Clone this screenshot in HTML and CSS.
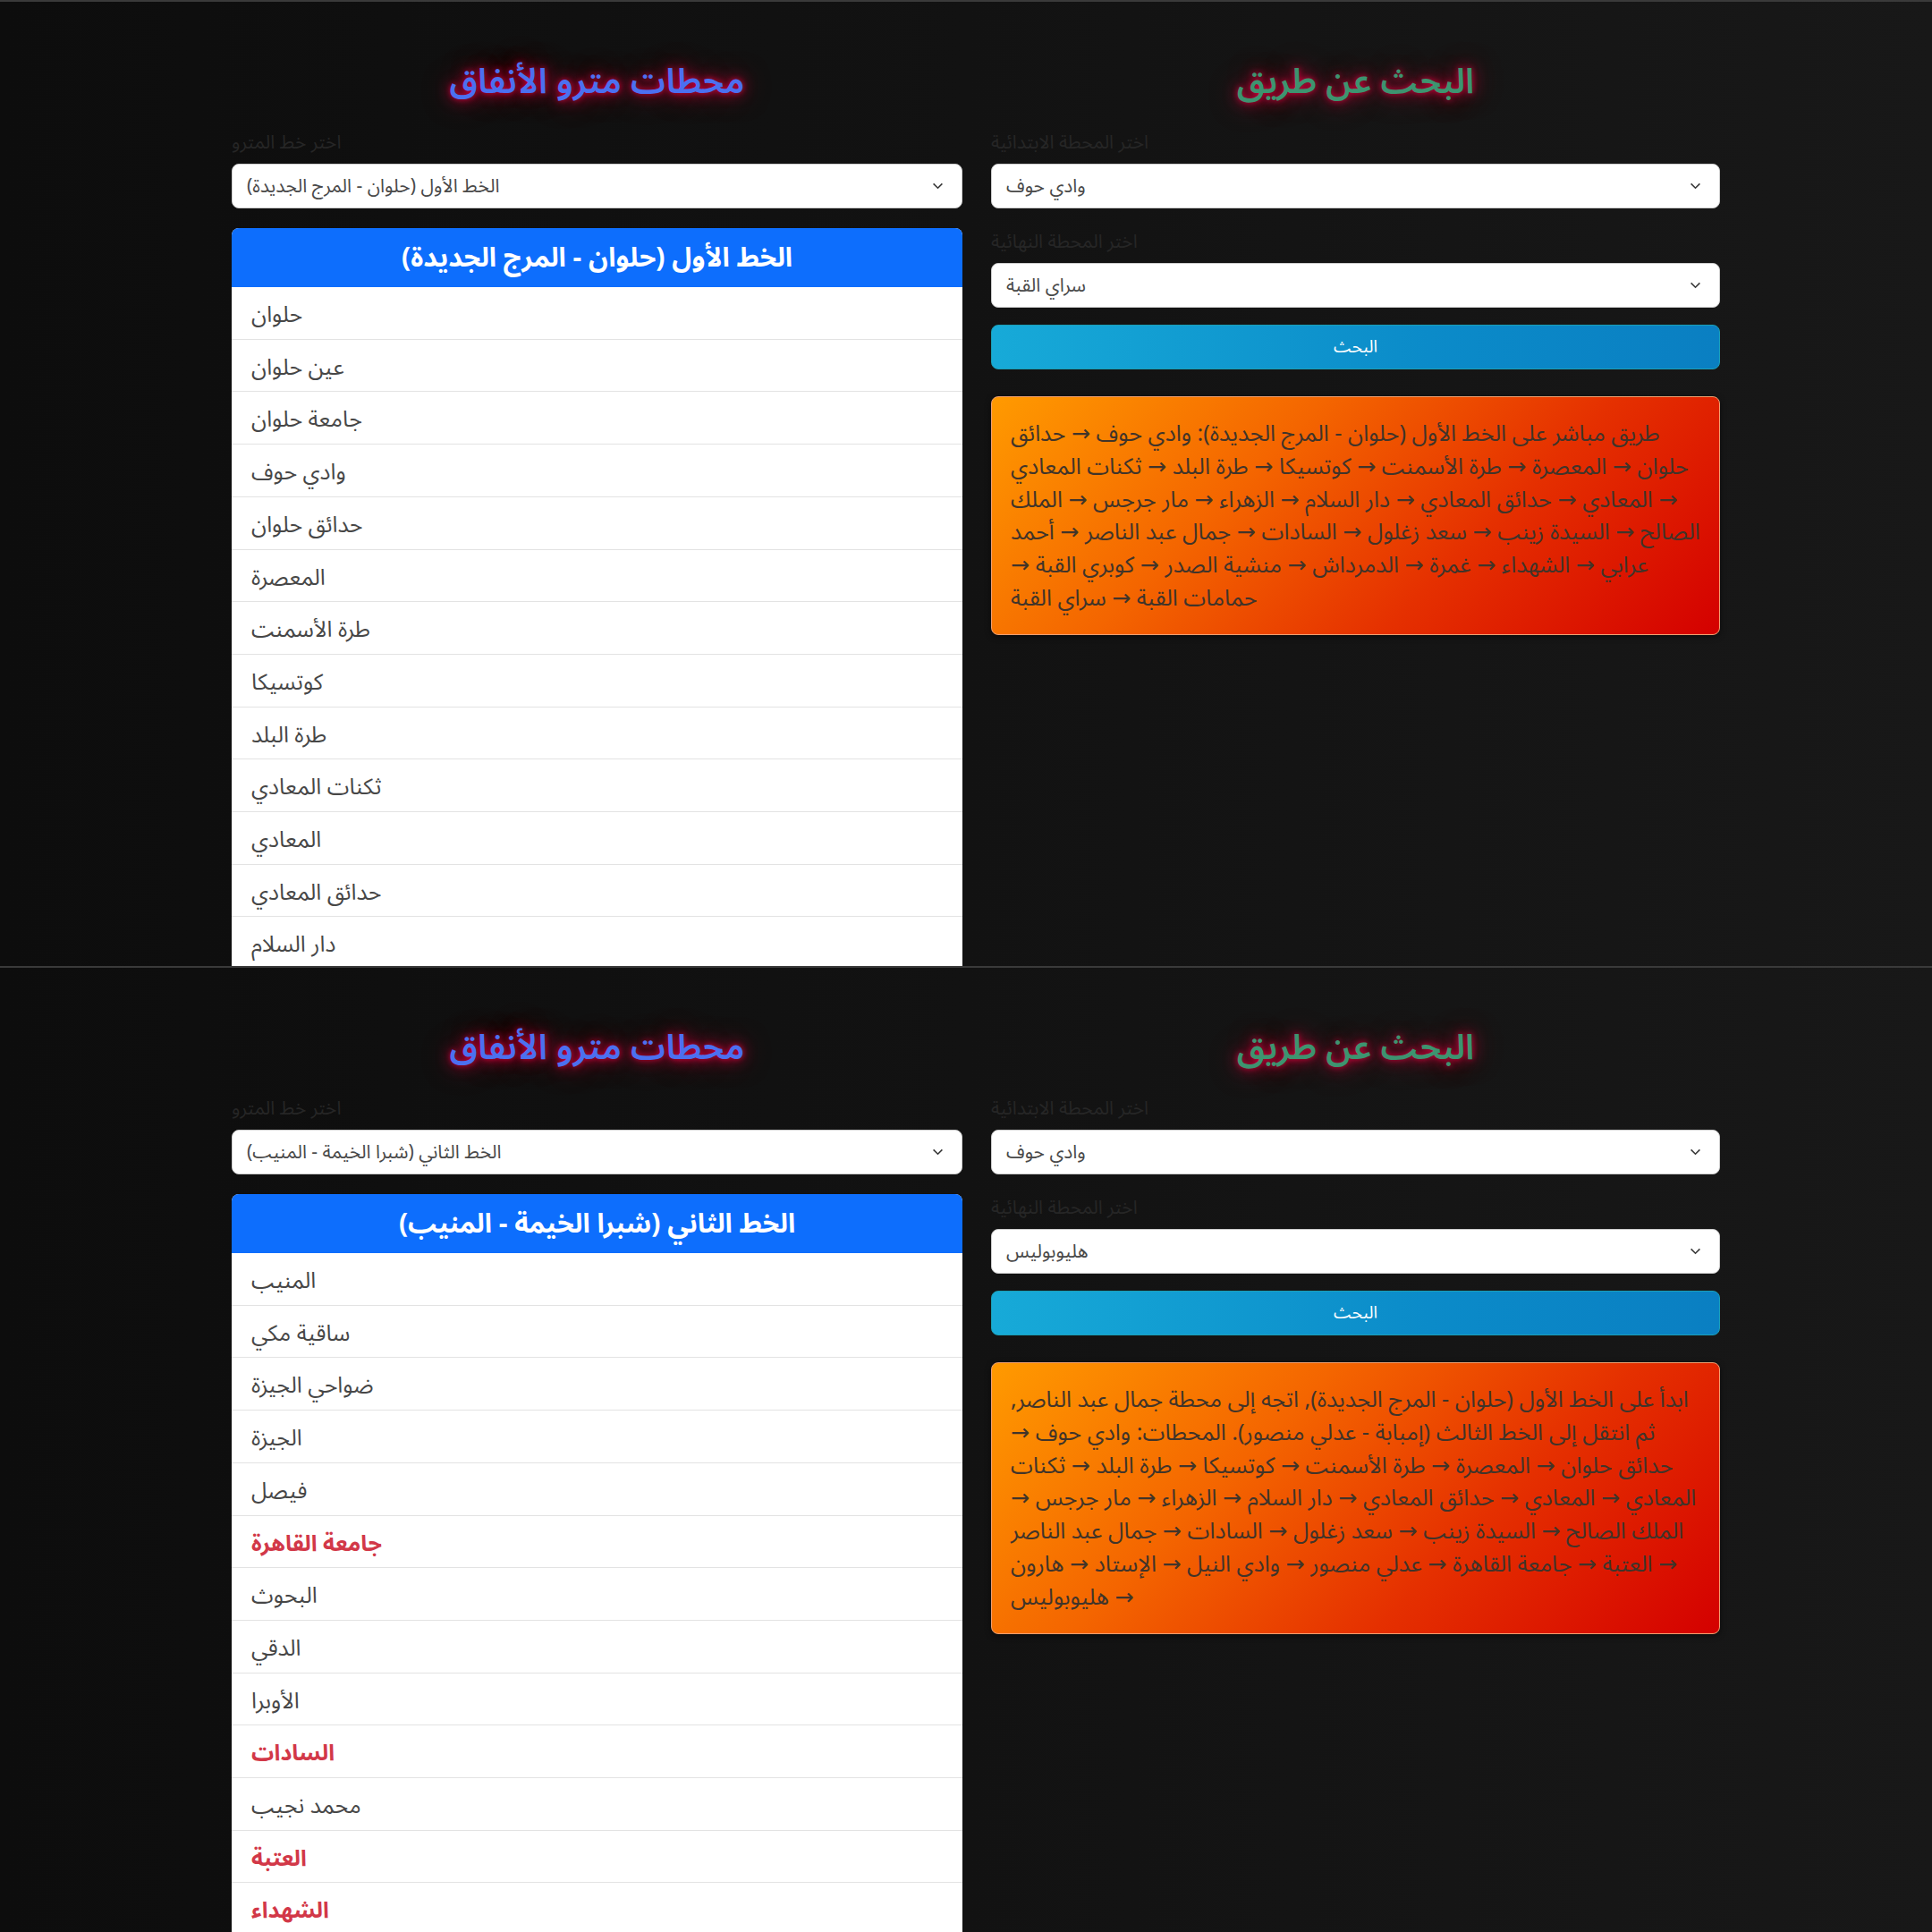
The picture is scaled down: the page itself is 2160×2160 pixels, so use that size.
FILE: index.html
```html
<!DOCTYPE html>
<html lang="ar">
<head>
<meta charset="utf-8">
<title>محطات مترو الأنفاق</title>
<link rel="stylesheet" href="styles.css">
</head>
<body>

<section class="shot">
  <div class="row">
    <div class="col">
      <h2 class="title title-blue">محطات مترو الأنفاق</h2>
      <label class="lbl">اختر خط المترو</label>
      <div class="select"><span>الخط الأول (حلوان - المرج الجديدة)</span><svg class="chev" viewBox="0 0 14 9" width="13" height="8"><polyline points="1.5,1.5 7,7 12.5,1.5"/></svg></div>
      <div class="card">
        <div class="card-head">الخط الأول (حلوان - المرج الجديدة)</div>
        <ul class="list">
          <li>حلوان</li>
          <li>عين حلوان</li>
          <li>جامعة حلوان</li>
          <li>وادي حوف</li>
          <li>حدائق حلوان</li>
          <li>المعصرة</li>
          <li>طرة الأسمنت</li>
          <li>كوتسيكا</li>
          <li>طرة البلد</li>
          <li>ثكنات المعادي</li>
          <li>المعادي</li>
          <li>حدائق المعادي</li>
          <li>دار السلام</li>
        </ul>
      </div>
    </div>
    <div class="col">
      <h2 class="title title-green">البحث عن طريق</h2>
      <label class="lbl">اختر المحطة الابتدائية</label>
      <div class="select"><span>وادي حوف</span><svg class="chev" viewBox="0 0 14 9" width="13" height="8"><polyline points="1.5,1.5 7,7 12.5,1.5"/></svg></div>
      <label class="lbl lbl-2">اختر المحطة النهائية</label>
      <div class="select"><span>سراي القبة</span><svg class="chev" viewBox="0 0 14 9" width="13" height="8"><polyline points="1.5,1.5 7,7 12.5,1.5"/></svg></div>
      <button class="btn">البحث</button>
      <div class="result">طريق مباشر على الخط الأول (حلوان - المرج الجديدة): وادي حوف → حدائق حلوان → المعصرة → طرة الأسمنت → كوتسيكا → طرة البلد → ثكنات المعادي → المعادي → حدائق المعادي → دار السلام → الزهراء → مار جرجس → الملك الصالح → السيدة زينب → سعد زغلول → السادات → جمال عبد الناصر → أحمد عرابي → الشهداء → غمرة → الدمرداش → منشية الصدر → كوبري القبة → حمامات القبة → سراي القبة</div>
    </div>
  </div>
</section>

<section class="shot">
  <div class="row">
    <div class="col">
      <h2 class="title title-blue">محطات مترو الأنفاق</h2>
      <label class="lbl">اختر خط المترو</label>
      <div class="select"><span>الخط الثاني (شبرا الخيمة - المنيب)</span><svg class="chev" viewBox="0 0 14 9" width="13" height="8"><polyline points="1.5,1.5 7,7 12.5,1.5"/></svg></div>
      <div class="card">
        <div class="card-head">الخط الثاني (شبرا الخيمة - المنيب)</div>
        <ul class="list">
          <li>المنيب</li>
          <li>ساقية مكي</li>
          <li>ضواحي الجيزة</li>
          <li>الجيزة</li>
          <li>فيصل</li>
          <li class="transfer">جامعة القاهرة</li>
          <li>البحوث</li>
          <li>الدقي</li>
          <li>الأوبرا</li>
          <li class="transfer">السادات</li>
          <li>محمد نجيب</li>
          <li class="transfer">العتبة</li>
          <li class="transfer">الشهداء</li>
        </ul>
      </div>
    </div>
    <div class="col">
      <h2 class="title title-green">البحث عن طريق</h2>
      <label class="lbl">اختر المحطة الابتدائية</label>
      <div class="select"><span>وادي حوف</span><svg class="chev" viewBox="0 0 14 9" width="13" height="8"><polyline points="1.5,1.5 7,7 12.5,1.5"/></svg></div>
      <label class="lbl lbl-2">اختر المحطة النهائية</label>
      <div class="select"><span>هليوبوليس</span><svg class="chev" viewBox="0 0 14 9" width="13" height="8"><polyline points="1.5,1.5 7,7 12.5,1.5"/></svg></div>
      <button class="btn">البحث</button>
      <div class="result">ابدأ على الخط الأول (حلوان - المرج الجديدة), اتجه إلى محطة جمال عبد الناصر, ثم انتقل إلى الخط الثالث (إمبابة - عدلي منصور). المحطات: وادي حوف → حدائق حلوان → المعصرة → طرة الأسمنت → كوتسيكا → طرة البلد → ثكنات المعادي → المعادي → حدائق المعادي → دار السلام → الزهراء → مار جرجس → الملك الصالح → السيدة زينب → سعد زغلول → السادات → جمال عبد الناصر → العتبة → جامعة القاهرة → عدلي منصور → وادي النيل → الإستاد → هارون → هليوبوليس</div>
    </div>
  </div>
</section>

</body>
</html>
```

FILE: styles.css
```css
* { box-sizing: border-box; }

html, body {
  margin: 0;
  padding: 0;
  background: #101010;
}

body {
  font-family: "Noto Sans Arabic", "Noto Sans Arabic UI", "Noto Naskh Arabic", "DejaVu Sans", sans-serif;
  color: #444;
}

.shot {
  height: 1080px;
  overflow: hidden;
  border-top: 2px solid #3a3a3a;
  background: linear-gradient(90deg, #0d0d0d 0%, #121212 50%, #181818 100%);
}

.row {
  display: grid;
  grid-template-columns: 817px 815px;
  column-gap: 32px;
  padding-left: 259px;
}

.col {
  display: flex;
  flex-direction: column;
}

.title {
  margin: 66px 0 0;
  height: 48px;
  line-height: 48px;
  text-align: center;
  font-size: 39px;
  font-weight: 600;
  text-shadow: 0 0 6px rgba(255, 0, 70, 0.7), 0 0 16px rgba(210, 0, 60, 0.8), 0 0 30px rgba(160, 0, 50, 0.8);
}

.title-blue { color: #4b70f0; }
.title-green { color: #3d9470; }

.lbl {
  display: block;
  margin-top: 30px;
  height: 26px;
  line-height: 26px;
  font-size: 21px;
  color: #262626;
}

.lbl-2 { margin-top: 24px; }

.select {
  margin-top: 11px;
  height: 50px;
  background: #fff;
  border: 1px solid #cfcfcf;
  border-radius: 8px;
  display: flex;
  align-items: center;
  justify-content: space-between;
  padding: 0 20px 0 16px;
  font-size: 21px;
  color: #4a4a4a;
}

.chev {
  fill: none;
  stroke: #3a3a3a;
  stroke-width: 1.8;
}

.card {
  margin-top: 22px;
  background: #fff;
  border-radius: 8px 8px 0 0;
  overflow: hidden;
}

.card-head {
  background: #0d6efd;
  color: #fff;
  height: 66px;
  line-height: 68px;
  text-align: center;
  font-size: 30px;
  font-weight: 700;
}

.list {
  list-style: none;
  margin: 0;
  padding: 0;
}

.list li {
  padding: 17px 22px 11px;
  line-height: 29.7px;
  font-size: 25px;
  color: #474747;
  border-bottom: 1px solid #e3e3e3;
}

.list li.transfer {
  color: #d23848;
  font-weight: 700;
}

.btn {
  margin-top: 19px;
  height: 50px;
  border: 1px solid #1aa0b8;
  border-radius: 8px;
  background: linear-gradient(90deg, #17aad8 0%, #0b8bc9 60%, #0a7fc2 100%);
  color: #fff;
  font-family: inherit;
  font-size: 19px;
}

.result {
  margin-top: 30px;
  padding: 23px 21px 21px;
  line-height: 36.8px;
  font-size: 25.2px;
  color: #40342a;
  background: linear-gradient(135deg, #ff9a00 0%, #f46500 35%, #e53000 65%, #d40000 100%);
  border: 1px solid #f0a070;
  border-radius: 8px;
  box-shadow: 0 2px 6px rgba(0, 0, 0, 0.5);
}
```
